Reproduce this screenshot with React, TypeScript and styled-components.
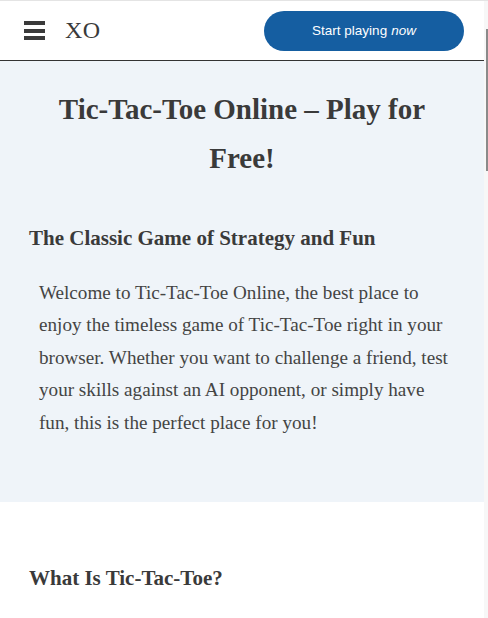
import React from "react";
import styled, { createGlobalStyle } from "styled-components";

const Global = createGlobalStyle`
  html, body { margin: 0; padding: 0; background: #ffffff; }
  body { font-family: "Liberation Serif", "Times New Roman", serif; color: #3a3a3a; }
`;

const Shell = styled.div`
  display: flex;
  width: 488px;
  height: 618px;
  overflow: hidden;
  border-top: 1px solid #e4e4e4;
  box-sizing: border-box;
`;

const Page = styled.div`
  width: 484px;
  flex: none;
  display: flex;
  flex-direction: column;
`;

const ScrollTrack = styled.div`
  width: 4px;
  flex: none;
  background: #f7f7f7;
  display: flex;
  justify-content: flex-end;
  padding-top: 28px;
  box-sizing: border-box;
`;

const ScrollThumb = styled.div`
  width: 2px;
  height: 142px;
  background: #8a8a8a;
`;

const Header = styled.header`
  height: 59px;
  border-bottom: 1px solid #333333;
  display: flex;
  align-items: center;
  padding: 0 20px 0 24px;
  background: #ffffff;
`;

const Burger = styled.button`
  width: 21px;
  height: 19px;
  border: 0;
  padding: 0;
  background: none;
  display: flex;
  flex-direction: column;
  justify-content: space-between;
  cursor: pointer;
`;

const BurgerBar = styled.span`
  display: block;
  height: 4px;
  background: #3a3a3a;
`;

const Logo = styled.span`
  margin-left: 20px;
  font-size: 24px;
  color: #3a3a3a;
  letter-spacing: 0.5px;
`;

const PlayButton = styled.a`
  margin-left: auto;
  width: 200px;
  height: 40px;
  border-radius: 20px;
  background: #155ea1;
  color: #ffffff;
  font-family: "Liberation Sans", Arial, sans-serif;
  font-size: 13.5px;
  display: flex;
  align-items: center;
  justify-content: center;
  text-decoration: none;
  em { font-style: italic; margin-left: 4px; }
`;

const Hero = styled.section`
  background: #eff4f9;
  padding: 24px 29px 63px;
`;

const Title = styled.h1`
  margin: 0;
  font-size: 29px;
  line-height: 49px;
  font-weight: 700;
  text-align: center;
  color: #3a3a3a;
  padding: 0 20px;
`;

const SubTitle = styled.h2<{ $top: number }>`
  margin: ${(p) => p.$top}px 0 0;
  font-size: 21px;
  line-height: 30px;
  font-weight: 700;
  color: #3a3a3a;
`;

const Paragraph = styled.p`
  margin: 24px 0 0;
  padding: 0 0 0 10px;
  font-size: 19.15px;
  line-height: 32.4px;
  color: #444444;
`;

const Section = styled.section`
  padding: 61px 29px 0;
`;

export default function App() {
  return (
    <>
      <Global />
      <Shell>
        <Page>
          <Header>
            <Burger aria-label="Menu">
              <BurgerBar />
              <BurgerBar />
              <BurgerBar />
            </Burger>
            <Logo>XO</Logo>
            <PlayButton href="#">
              Start playing<em>now</em>
            </PlayButton>
          </Header>
          <Hero>
            <Title>Tic-Tac-Toe Online – Play for Free!</Title>
            <SubTitle $top={40}>The Classic Game of Strategy and Fun</SubTitle>
            <Paragraph>
              Welcome to Tic-Tac-Toe Online, the best place to enjoy the timeless game of
              Tic-Tac-Toe right in your browser. Whether you want to challenge a friend, test
              your skills against an AI opponent, or simply have fun, this is the perfect place
              for you!
            </Paragraph>
          </Hero>
          <Section>
            <SubTitle $top={0}>What Is Tic-Tac-Toe?</SubTitle>
          </Section>
        </Page>
        <ScrollTrack>
          <ScrollThumb />
        </ScrollTrack>
      </Shell>
    </>
  );
}
